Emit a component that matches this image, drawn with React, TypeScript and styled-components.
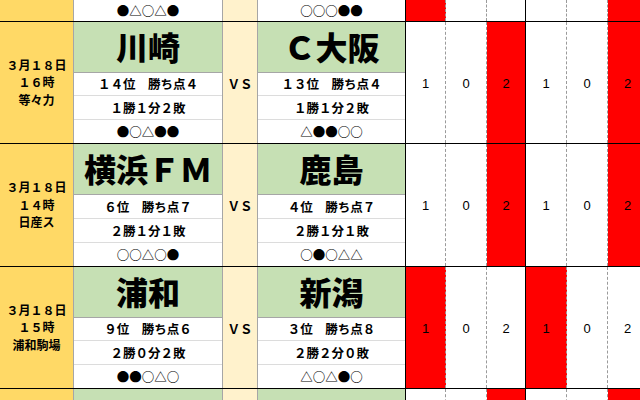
import React from 'react';
import styled, { createGlobalStyle } from 'styled-components';

const GlobalStyle = createGlobalStyle`
  html, body {
    margin: 0;
    padding: 0;
    background: #ffffff;
    overflow: hidden;
  }
  body {
    font-family: "Noto Sans CJK JP", "Noto Sans", sans-serif;
    color: #000;
  }
  * { box-sizing: border-box; }
`;

type Team = { name: string; rank: string; record: string; form: string };
type Score = { v: string; red?: boolean };
type Match = { date: string[]; home: Team; away: Team; scores: Score[] };

const matches: Array<Match> = [
  {
    date: ['３月１８日', '１６時', '等々力'],
    home: { name: '川崎', rank: '１４位　勝ち点４', record: '１勝１分２敗', form: '●○△●●' },
    away: { name: 'Ｃ大阪', rank: '１３位　勝ち点４', record: '１勝１分２敗', form: '△●●○○' },
    scores: [{ v: '1' }, { v: '0' }, { v: '2', red: true }, { v: '1' }, { v: '0' }, { v: '2', red: true }],
  },
  {
    date: ['３月１８日', '１４時', '日産ス'],
    home: { name: '横浜ＦＭ', rank: '６位　勝ち点７', record: '２勝１分１敗', form: '○○△○●' },
    away: { name: '鹿島', rank: '４位　勝ち点７', record: '２勝１分１敗', form: '○●○△△' },
    scores: [{ v: '1' }, { v: '0' }, { v: '2', red: true }, { v: '1' }, { v: '0' }, { v: '2', red: true }],
  },
  {
    date: ['３月１８日', '１５時', '浦和駒場'],
    home: { name: '浦和', rank: '９位　勝ち点６', record: '２勝０分２敗', form: '●●○△○' },
    away: { name: '新潟', rank: '３位　勝ち点８', record: '２勝２分０敗', form: '△○△●○' },
    scores: [{ v: '1', red: true }, { v: '0' }, { v: '2' }, { v: '1', red: true }, { v: '0' }, { v: '2' }],
  },
];

// the row cut by the top edge: only its last line shows
const topTail = {
  homeForm: '●△○△●',
  awayForm: '○○○●●',
  red: [true, false, false, false, false, true],
};

// the row cut by the bottom edge: only the top of its cells shows
const bottomHead = {
  red: [false, false, true, false, false, true],
};

// score column widths, and which separator sits on the right of each
const scoreCols: Array<{ w: number; line: 'dashed' | 'solid' }> = [
  { w: 40, line: 'dashed' },
  { w: 41, line: 'dashed' },
  { w: 39, line: 'solid' },
  { w: 41, line: 'dashed' },
  { w: 41, line: 'dashed' },
  { w: 40, line: 'dashed' },
];

function TeamBlock({ team, edge }: { team: Team; edge: 'grey' | 'black' }) {
  return (
    <TeamCell $edge={edge}>
      <TeamName>{team.name}</TeamName>
      <InfoLine>{team.rank}</InfoLine>
      <InfoLine>{team.record}</InfoLine>
      <InfoLine $last>{team.form}</InfoLine>
    </TeamCell>
  );
}

function App() {
  return (
    <>
      <GlobalStyle />
      <Sheet>
        <MatchRow $h={21.5}>
          <DateCell />
          <TeamCell $edge="grey">
            <InfoLine $last>{topTail.homeForm}</InfoLine>
          </TeamCell>
          <VsCell />
          <TeamCell $edge="black">
            <InfoLine $last>{topTail.awayForm}</InfoLine>
          </TeamCell>
          {topTail.red.map((r, j) => (
            <ScoreCell key={j} $w={scoreCols[j].w} $line={scoreCols[j].line} $red={r} />
          ))}
        </MatchRow>

        {matches.map((m, i) => (
          <MatchRow key={i} $h={122.5}>
            <DateCell>
              {m.date.map((d, j) => (
                <div key={j}>{d}</div>
              ))}
            </DateCell>
            <TeamBlock team={m.home} edge="grey" />
            <VsCell>ＶＳ</VsCell>
            <TeamBlock team={m.away} edge="black" />
            {m.scores.map((s, j) => (
              <ScoreCell key={j} $w={scoreCols[j].w} $line={scoreCols[j].line} $red={!!s.red}>
                {s.v}
              </ScoreCell>
            ))}
          </MatchRow>
        ))}

        <MatchRow $h={30}>
          <DateCell />
          <TeamCell $edge="grey">
            <TeamName />
          </TeamCell>
          <VsCell />
          <TeamCell $edge="black">
            <TeamName />
          </TeamCell>
          {bottomHead.red.map((r, j) => (
            <ScoreCell key={j} $w={scoreCols[j].w} $line={scoreCols[j].line} $red={r} />
          ))}
        </MatchRow>
      </Sheet>
    </>
  );
}

export default App;

// Styled Components
const Sheet = styled.div`
  display: flex;
  flex-direction: column;
  width: 660px;
  height: 400px;
  overflow: hidden;
`;

const MatchRow = styled.div<{ $h: number }>`
  display: flex;
  height: ${(p) => p.$h}px;
  flex-shrink: 0;
  border-bottom: 1.5px solid #000;
`;

const DateCell = styled.div`
  width: 74px;
  flex-shrink: 0;
  background: #ffd966;
  border-right: 1px solid #a6a6a6;
  display: flex;
  flex-direction: column;
  align-items: center;
  justify-content: center;
  font-size: 12px;
  font-weight: 700;
  line-height: 17.5px;
  padding-bottom: 1px;
`;

const TeamCell = styled.div<{ $edge: 'grey' | 'black' }>`
  width: ${(p) => (p.$edge === 'grey' ? 149 : 148)}px;
  flex-shrink: 0;
  display: flex;
  flex-direction: column;
  border-right: 1px solid ${(p) => (p.$edge === 'grey' ? '#a6a6a6' : '#000')};
`;

const TeamName = styled.div`
  height: 51px;
  flex-shrink: 0;
  background: #c6e0b4;
  border-bottom: 1px solid #a6a6a6;
  display: flex;
  align-items: center;
  justify-content: center;
  font-size: 32px;
  font-weight: 900;
  line-height: 1;
  padding-bottom: 2px;
`;

const InfoLine = styled.div<{ $last?: boolean }>`
  flex: 1;
  display: flex;
  align-items: center;
  justify-content: center;
  font-size: 12.5px;
  font-weight: 700;
  white-space: pre;
  border-bottom: ${(p) => (p.$last ? 'none' : '1px solid #dcdcdc')};
`;

const VsCell = styled.div`
  width: 35px;
  flex-shrink: 0;
  background: #fff2cc;
  border-right: 1px solid #a6a6a6;
  display: flex;
  align-items: center;
  justify-content: center;
  font-size: 12.5px;
  font-weight: 700;
  padding-top: 2px;
`;

const ScoreCell = styled.div<{ $w: number; $line: 'dashed' | 'solid'; $red: boolean }>`
  width: ${(p) => p.$w}px;
  flex-shrink: 0;
  background: ${(p) => (p.$red ? '#ff0000' : '#ffffff')};
  border-right: ${(p) => (p.$line === 'solid' ? '1.5px solid #000' : '1px dashed #9a9a9a')};
  display: flex;
  align-items: center;
  justify-content: center;
  font-family: "Liberation Sans", Arial, sans-serif;
  font-size: 13px;
  padding-top: 2px;
`;
